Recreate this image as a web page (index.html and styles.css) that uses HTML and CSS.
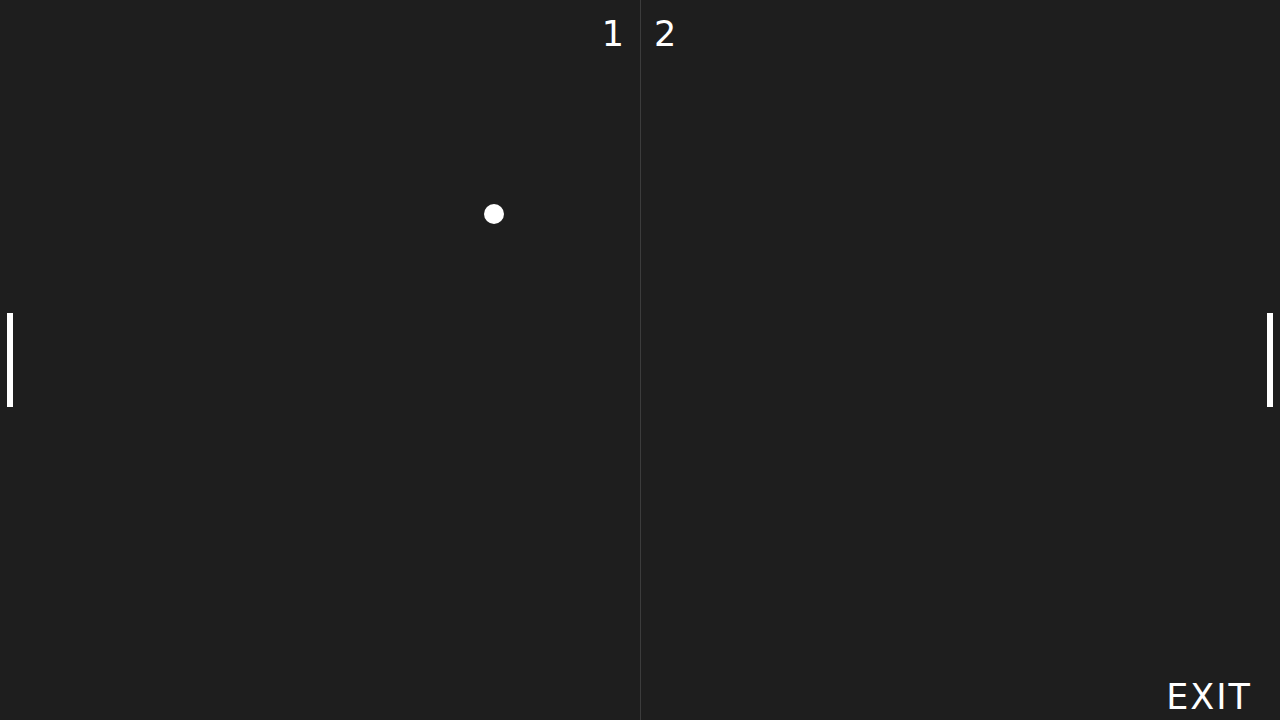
FILE: index.html
```html
<!DOCTYPE html>
<html lang="en">
<head>
<meta charset="utf-8">
<title>Pong</title>
<link rel="stylesheet" href="styles.css">
</head>
<body>
<main class="court">
  <div class="net"></div>
  <header class="scores">
    <span class="score score-left">1</span>
    <span class="score score-right">2</span>
  </header>
  <div class="paddle paddle-left"></div>
  <div class="paddle paddle-right"></div>
  <div class="ball"></div>
  <footer class="footer">
    <button class="exit">EXIT</button>
  </footer>
</main>
</body>
</html>
```

FILE: styles.css
```css
html, body {
  margin: 0;
  padding: 0;
  height: 100%;
  background: #1e1e1e;
  overflow: hidden;
}
.court {
  position: relative;
  width: 1280px;
  height: 720px;
  display: flex;
  flex-direction: column;
  justify-content: space-between;
  font-family: "Comic Sans MS", "DejaVu Sans", sans-serif;
  color: #ffffff;
}
.net {
  position: absolute;
  left: 640px;
  top: 0;
  width: 1px;
  height: 720px;
  background: #3c3c3c;
}
.scores {
  display: grid;
  grid-template-columns: 1fr 1fr;
  padding-top: 13px;
}
.score {
  font-size: 35px;
  line-height: 42px;
}
.score-left {
  justify-self: end;
  padding-right: 16px;
}
.score-right {
  justify-self: start;
  padding-left: 14px;
}
.paddle {
  position: absolute;
  top: 313px;
  width: 6px;
  height: 94px;
  background: #ffffff;
}
.paddle-left { left: 7px; }
.paddle-right { left: 1267px; }
.ball {
  position: absolute;
  left: 484px;
  top: 204px;
  width: 20px;
  height: 20px;
  border-radius: 50%;
  background: #ffffff;
}
.footer {
  display: flex;
  justify-content: flex-end;
  padding: 0 30px 2px 0;
}
.exit {
  background: none;
  border: none;
  padding: 0;
  color: #ffffff;
  font-family: inherit;
  font-size: 35px;
  line-height: 42px;
  letter-spacing: 2px;
  margin-right: -2px;
  cursor: pointer;
}
```
